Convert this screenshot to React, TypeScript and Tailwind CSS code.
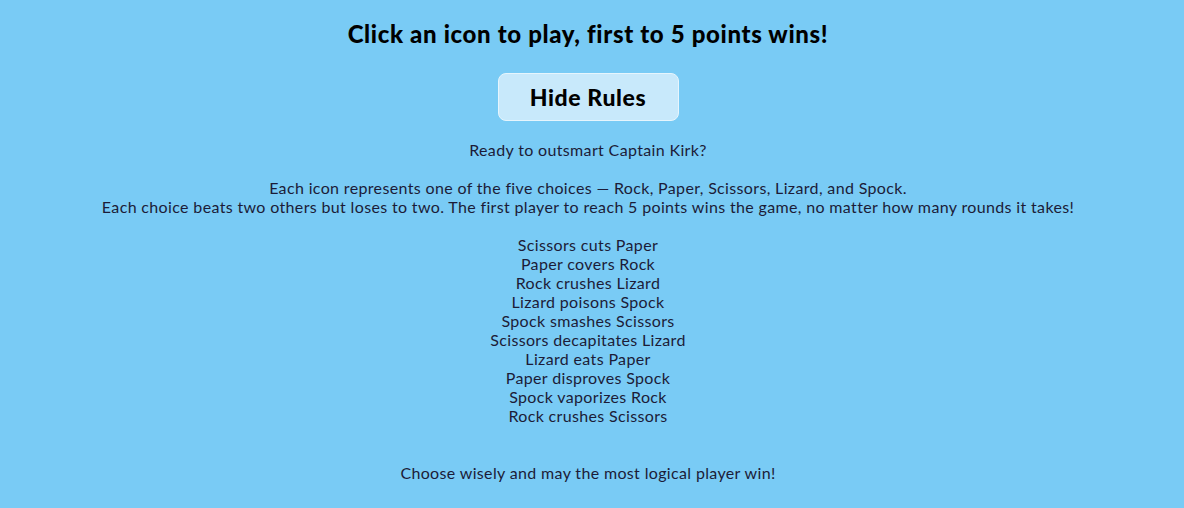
import React from 'react';

const rules = [
  'Scissors cuts Paper',
  'Paper covers Rock',
  'Rock crushes Lizard',
  'Lizard poisons Spock',
  'Spock smashes Scissors',
  'Scissors decapitates Lizard',
  'Lizard eats Paper',
  'Paper disproves Spock',
  'Spock vaporizes Rock',
  'Rock crushes Scissors'
];

const App: React.FC = () => {
  return (
    <div className="min-h-screen w-full bg-[#79cbf5] pr-2 text-center">
      <h1 className="pt-[18px] font-['Lato',sans-serif] text-[24px] leading-[32px] font-black tracking-[0.65px] text-black">
        Click an icon to play, first to 5 points wins!
      </h1>
      <div className="mt-[23px] flex justify-center">
        <button className="h-[48px] w-[181px] rounded-[8px] border border-[#e6f5fd] bg-[#c8e9fb] font-['Lato',sans-serif] text-[23px] font-black tracking-[0.6px] text-black">
          Hide Rules
        </button>
      </div>
      <div className="mt-[19px] font-['Lato',sans-serif] text-[16px] leading-[19px] tracking-[0.35px] text-[#1c1c38]">
        <p>Ready to outsmart Captain Kirk?</p>
        <p className="mt-[19px]">
          Each icon represents one of the five choices — Rock, Paper, Scissors, Lizard, and Spock.
          <br />
          Each choice beats two others but loses to two. The first player to reach 5 points wins the game, no matter how many rounds it takes!
        </p>
        <ul className="mt-[19px]">
          {rules.map((r) => (
            <li key={r}>{r}</li>
          ))}
        </ul>
        <p className="mt-[38px]">Choose wisely and may the most logical player win!</p>
      </div>
    </div>
  );
};

export default App;
